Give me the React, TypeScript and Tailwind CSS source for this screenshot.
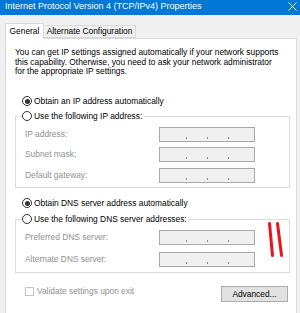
import type { ReactNode } from 'react'

const LABEL = 'text-[#8f8f8f]'

function Radio({ checked, children }: { checked?: boolean; children: ReactNode }) {
  return (
    <div className="flex items-center h-[12px]">
      <span className="w-[10px] h-[10px] rounded-full border border-[#333] bg-white flex items-center justify-center shrink-0">
        {checked && <span className="w-[5px] h-[5px] rounded-full bg-[#333]" />}
      </span>
      <span className="ml-[2px] whitespace-nowrap">{children}</span>
    </div>
  )
}

function IpField({ label, className = '' }: { label: string; className?: string }) {
  return (
    <div className={`flex items-center h-[15px] pl-[9px] ${className}`}>
      <span className={`w-[134px] whitespace-nowrap ${LABEL}`}>{label}</span>
      <div className="w-[96px] h-[15px] border border-[#a8a8a8] bg-[#f0f0f0] flex items-end justify-center gap-[20px] pb-[2px]">
        {[0, 1, 2].map(i => (
          <span key={i} className="w-px h-[2px] bg-[#8a8a8a]" />
        ))}
      </div>
    </div>
  )
}

export default function App() {
  return (
    <div className="relative w-[300px] h-[313px] overflow-hidden bg-[#f0f0f0] font-['Liberation_Sans',Arial,sans-serif] text-[8.4px] text-black">
      {/* title bar */}
      <div className="h-[15px] bg-[#0078d7] text-white flex items-start justify-between pl-[5px] pr-[3px]">
        <span className="text-[9px] leading-[13px] whitespace-nowrap">Internet Protocol Version 4 (TCP/IPv4) Properties</span>
        <svg width="9" height="9" viewBox="0 0 9 9" className="mt-[2px]">
          <path d="M0.5 0.5 L8.5 8.5 M8.5 0.5 L0.5 8.5" stroke="white" strokeWidth="1" />
        </svg>
      </div>

      {/* tabs */}
      <div className="flex items-end pl-[5px] pt-[8px]">
        <div className="relative z-10 -mb-px w-[39px] h-[16px] bg-white border border-b-0 border-[#d9d9d9] flex items-center justify-center">
          General
        </div>
        <div className="w-[92px] h-[13px] border border-l-0 border-[#d9d9d9] flex items-center justify-center whitespace-nowrap">
          Alternate Configuration
        </div>
      </div>

      {/* panel */}
      <div className="ml-[5px] w-[292px] h-[280px] bg-white border border-[#d9d9d9]">
        <p className="mt-[9px] pl-[9px] h-[29px] leading-[9.5px]">
          You can get IP settings assigned automatically if your network supports
          <br />
          this capability. Otherwise, you need to ask your network administrator
          <br />
          for the appropriate IP settings.
        </p>

        <div className="mt-[18px] pl-[16px]">
          <Radio checked>Obtain an IP address automatically</Radio>
        </div>

        <fieldset className="mt-[3px] ml-[9px] w-[275px] border border-[#dcdcdc] pb-[4px]">
          <legend className="ml-[6px] pr-[1px] bg-white">
            <Radio>Use the following IP address:</Radio>
          </legend>
          <IpField label="IP address:" className="mt-[5px]" />
          <IpField label="Subnet mask:" className="mt-[5px]" />
          <IpField label="Default gateway:" className="mt-[6px]" />
        </fieldset>

        <div className="mt-[9px] pl-[16px]">
          <Radio checked>Obtain DNS server address automatically</Radio>
        </div>

        <fieldset className="mt-[4px] ml-[9px] w-[275px] border border-[#dcdcdc] pb-[5px]">
          <legend className="ml-[6px] pr-[1px] bg-white">
            <Radio>Use the following DNS server addresses:</Radio>
          </legend>
          <IpField label="Preferred DNS server:" className="mt-[5px]" />
          <IpField label="Alternate DNS server:" className="mt-[7px]" />
        </fieldset>

        <div className="mt-[13px] pl-[19px] pr-[8px] flex items-start justify-between">
          <div className="flex items-center h-[10px]">
            <span className="w-[9px] h-[9px] border border-[#c4c4c4] bg-white" />
            <span className={`ml-[3px] whitespace-nowrap ${LABEL}`}>Validate settings upon exit</span>
          </div>
          <button className="w-[67px] h-[16px] bg-[#e1e1e1] border border-[#adadad] flex items-center justify-center">
            Advanced...
          </button>
        </div>
      </div>

      {/* hand-drawn red marks */}
      <svg className="absolute left-[266px] top-[221px]" width="20" height="38" viewBox="0 0 20 38">
        <path d="M3.5 2.5 L6.5 34.5 M11.5 2.5 L15.5 34.5" stroke="#e8141f" strokeWidth="3" strokeLinecap="round" />
      </svg>
    </div>
  )
}
